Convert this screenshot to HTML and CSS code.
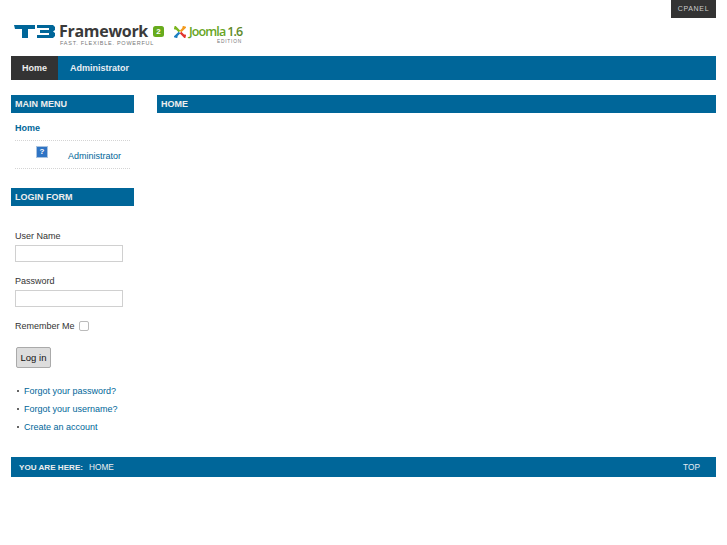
FILE: index.html
```html
<!DOCTYPE html>
<html lang="en">
<head>
<meta charset="utf-8">
<title>T3 Framework</title>
<link rel="stylesheet" href="styles.css">
</head>
<body>
<a class="cpanel" href="#">CPANEL</a>
<div class="wrap">
  <header class="header">
    <div class="logo-t3">
      <svg class="t3-mark" width="41" height="13" viewBox="0 0 41 13" aria-hidden="true">
        <path fill="#069" d="M0 0H21V4H14V13H8V4H1Z"/>
        <path fill="#069" d="M23 0H39L41 2V5L39 6.500L41 8V11L39 13H23V10H35V8H26V5H35V3H23Z"/>
      </svg>
      <div class="t3-text">
        <div class="fw">Framework</div>
        <div class="tag">FAST. FLEXIBLE. POWERFUL</div>
      </div>
      <span class="badge">2</span>
    </div>
    <div class="logo-joomla">
      <svg class="j-icon" width="12" height="12" viewBox="0 0 12 12" aria-hidden="true">
        <path fill="none" stroke="#7ab51d" stroke-width="2.400" d="M1 3.500L1.500 1.500L5.500 5.500"/>
        <path fill="none" stroke="#f39a1e" stroke-width="2.400" d="M8.500 1L10.500 1.500L6.500 5.500"/>
        <path fill="none" stroke="#1c7fc2" stroke-width="2.400" d="M3.500 11L1.500 10.500L5.500 6.500"/>
        <path fill="none" stroke="#e2342c" stroke-width="2.400" d="M11 8.500L10.500 10.500L6.500 6.500"/>
      </svg>
      <div class="j-text">
        <div class="j-name">Joomla<span class="j-ver">1.6</span></div>
        <div class="j-ed">EDITION</div>
      </div>
    </div>
  </header>
  <nav class="nav">
    <a class="nav-item active" href="#">Home</a>
    <a class="nav-item" href="#">Administrator</a>
  </nav>
  <div class="columns">
    <aside class="side">
      <section class="module">
        <h3 class="bar">MAIN MENU</h3>
        <ul class="menu">
          <li class="menu-home"><a href="#">Home</a></li>
          <li class="menu-admin">
            <span class="broken">?</span>
            <a href="#">Administrator</a>
          </li>
        </ul>
      </section>
      <section class="module">
        <h3 class="bar">LOGIN FORM</h3>
        <form class="login">
          <label class="lab" for="u">User Name</label>
          <input class="field" id="u" type="text">
          <label class="lab" for="p">Password</label>
          <input class="field" id="p" type="password">
          <div class="remember">
            <label for="r">Remember Me</label>
            <input class="check" id="r" type="checkbox">
          </div>
          <button class="btn" type="button">Log in</button>
        </form>
        <ul class="links">
          <li><a href="#">Forgot your password?</a></li>
          <li><a href="#">Forgot your username?</a></li>
          <li><a href="#">Create an account</a></li>
        </ul>
      </section>
    </aside>
    <main class="main">
      <h2 class="bar">HOME</h2>
    </main>
  </div>
  <footer class="foot">
    <div><strong>YOU ARE HERE:</strong><span class="crumb">HOME</span></div>
    <a href="#">TOP</a>
  </footer>
</div>
</body>
</html>
```
FILE: styles.css
```css
* { box-sizing: border-box; }
html, body { margin: 0; padding: 0; }
body {
  background: #fff;
  color: #333;
  font-family: "Liberation Sans", Arial, sans-serif;
  font-size: 9px;
  height: 545px;
  overflow: hidden;
}
a { text-decoration: none; color: #069; }
.cpanel {
  position: absolute;
  top: 0;
  right: 11px;
  width: 45px;
  height: 18px;
  background: #333;
  color: #ccc;
  font-size: 7px;
  letter-spacing: 0.700px;
  line-height: 18px;
  text-align: center;
}
.wrap { margin: 0 11px; }
.header {
  height: 56px;
  display: flex;
  align-items: flex-start;
  padding-top: 25px;
  padding-left: 3px;
}
.logo-t3 { display: flex; align-items: flex-start; }
.t3-mark { margin-right: 4px; }
.t3-text { width: 94px; margin-top: -2px; }
.fw {
  font-family: "Open Sans", sans-serif;
  font-weight: 700;
  font-size: 16px;
  line-height: 16px;
  color: #3a3a3a;
  letter-spacing: -0.300px;
}
.tag {
  font-size: 5.500px;
  line-height: 6px;
  margin-top: 1px;
  margin-left: 1px;
  letter-spacing: 0.750px;
  color: #777;
  white-space: nowrap;
}
.badge {
  width: 11px;
  height: 11px;
  margin-top: 1px;
  border-radius: 2.500px;
  background: #67ab1d;
  color: #fff;
  font-size: 8px;
  font-weight: bold;
  line-height: 11px;
  text-align: center;
}
.logo-joomla { display: flex; margin-left: 10px; margin-top: 1px; }
.j-text { margin-left: 3px; width: 53px; }
.j-name {
  font-family: "Open Sans", sans-serif;
  font-weight: 600;
  font-size: 12.500px;
  line-height: 11px;
  letter-spacing: -0.900px;
  color: #67a51e;
  white-space: nowrap;
}
.j-ver { margin-left: 2px; color: #5f8a2a; }
.j-ed {
  font-size: 4.800px;
  line-height: 5px;
  margin-top: 2px;
  letter-spacing: 0.800px;
  text-align: right;
  color: #777;
}
.nav {
  height: 24px;
  background: #069;
  display: flex;
  gap: 1px;
}
.nav-item {
  color: #e8eef4;
  font-weight: bold;
  line-height: 24px;
  padding: 0 11px;
}
.nav-item.active { background: #333; color: #eee; width: 47px; }
.columns {
  display: flex;
  gap: 23px;
  margin-top: 15px;
  height: 362px;
}
.side { width: 123px; flex: none; }
.main { flex: 1; }
.bar {
  margin: 0;
  height: 18px;
  background: #069;
  color: #eee;
  font-size: 9px;
  font-weight: bold;
  line-height: 18px;
  padding-left: 4px;
}
.module { margin-bottom: 19px; }
.menu {
  list-style: none;
  margin: 0;
  padding: 0 4px;
}
.menu-home {
  height: 28px;
  line-height: 30px;
  font-weight: bold;
  border-bottom: 1px dotted #d4d4d4;
}
.menu-admin {
  height: 28px;
  border-bottom: 1px dotted #d4d4d4;
  display: flex;
  align-items: flex-start;
}
.menu-admin a { line-height: 31px; margin-left: 20px; }
.broken {
  width: 12px;
  height: 12px;
  margin-left: 21px;
  margin-top: 5px;
  background: #2f74c4;
  border: 1px solid #a9c3e0;
  color: #fff;
  font-size: 8px;
  font-weight: bold;
  line-height: 10px;
  text-align: center;
}
.login { padding: 25px 4px 0; display: flex; flex-direction: column; align-items: flex-start; }
.lab { line-height: 11px; }
.field {
  width: 108px;
  height: 17px;
  margin: 3px 0 14px;
  border: 1px solid #d0d0d0;
  background: #fff;
  padding: 0;
}
.remember { display: flex; align-items: center; height: 12px; margin-top: -1px; gap: 4px; }
.check {
  appearance: none;
  width: 10px;
  height: 10px;
  margin: 0;
  border: 1px solid #bbb;
  border-radius: 2px;
  background: #fff;
}
.btn {
  margin: 15px 0 0 1px;
  width: 35px;
  height: 21px;
  padding: 0;
  background: #ddd;
  border: 1px solid #aaa;
  border-radius: 2px;
  font: 9.500px "Liberation Sans", Arial, sans-serif;
  color: #111;
}
.links { list-style: none; margin: 14px 0 0; padding: 0 0 0 13px; }
.links li { position: relative; height: 18px; line-height: 18px; white-space: nowrap; }
.links li::before {
  content: "";
  position: absolute;
  left: -7px;
  top: 8px;
  width: 2px;
  height: 2px;
  background: #666;
}
.foot {
  height: 20px;
  background: #069;
  color: #eee;
  display: flex;
  justify-content: space-between;
  align-items: center;
  padding: 0 16px 0 8px;
  font-size: 8.300px;
}
.foot strong { font-weight: bold; font-size: 8.100px; }
.crumb { margin-left: 6px; }
.foot a { color: #e4ecf2; }
```
